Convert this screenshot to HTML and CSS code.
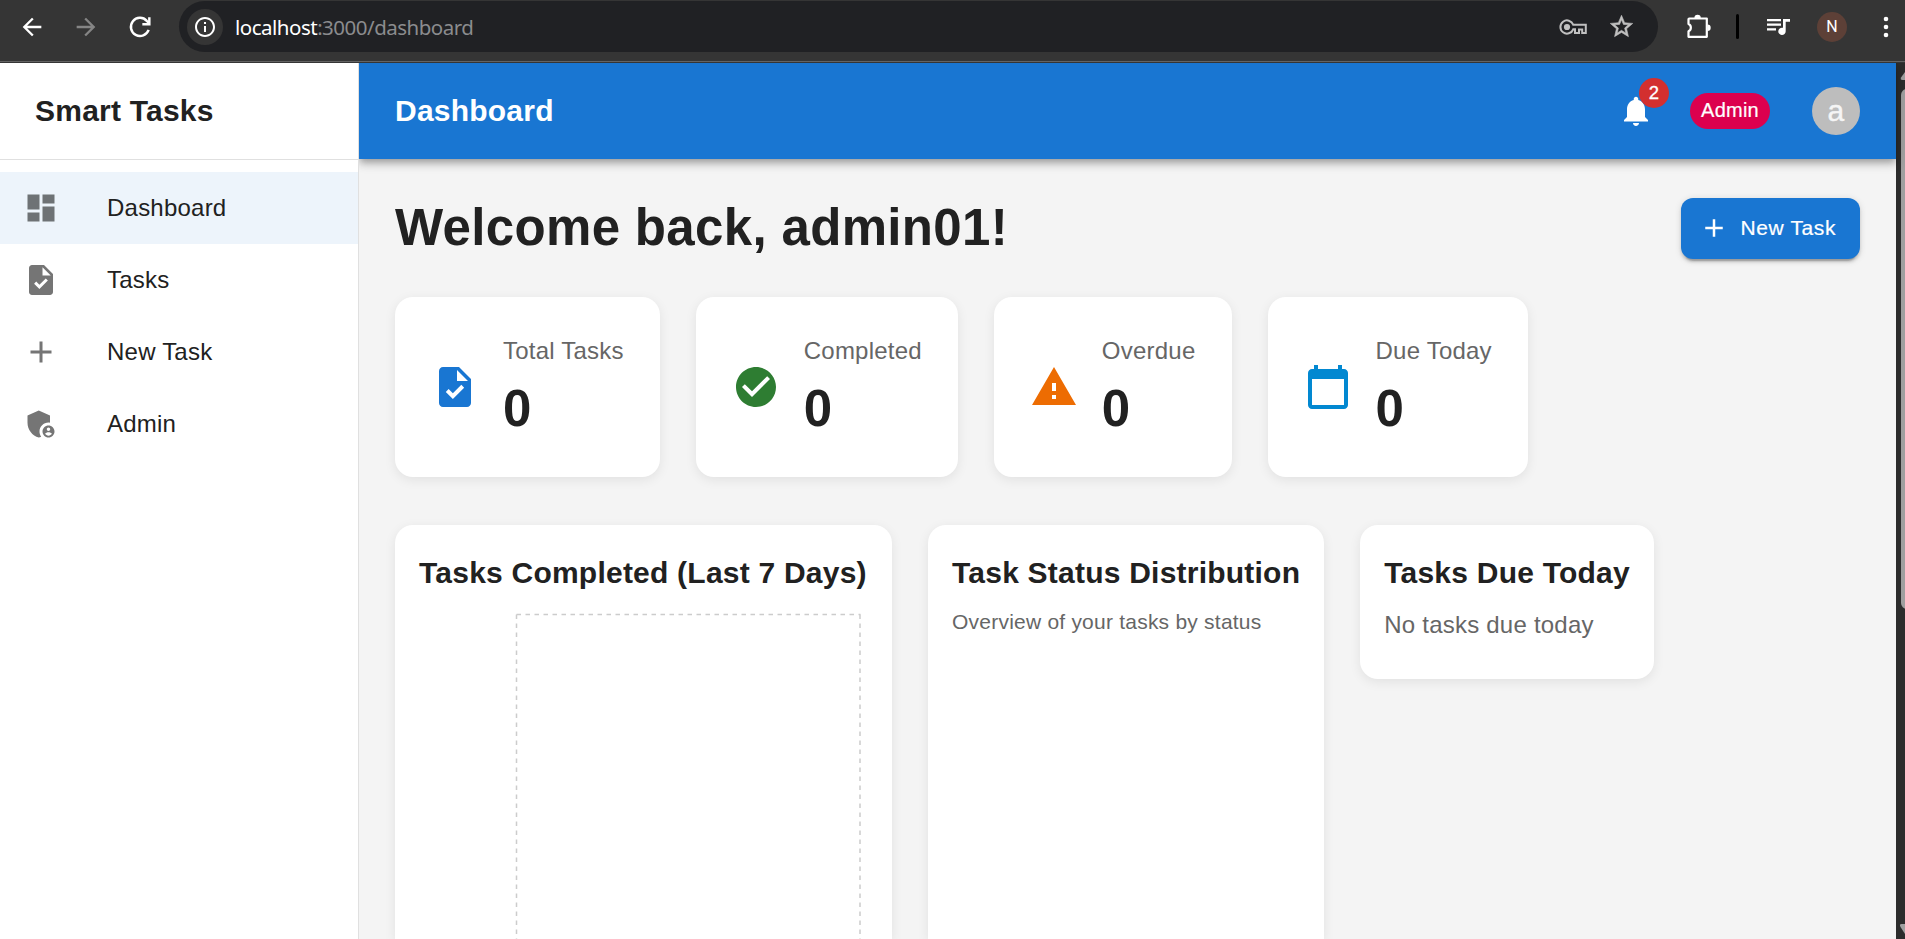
FILE: index.html
```html
<!DOCTYPE html>
<html lang="en">
<head>
<meta charset="utf-8">
<title>Smart Tasks</title>
<link rel="stylesheet" href="styles.css">
</head>
<body>
<div class="browser">
  <svg class="nav-back" viewBox="0 0 24 24"><path d="M20 11H7.83l5.59-5.59L12 4l-8 8 8 8 1.41-1.41L7.83 13H20z"/></svg>
  <svg class="nav-forward" viewBox="0 0 24 24"><path d="M12 4l-1.41 1.41L16.17 11H4v2h12.17l-5.58 5.59L12 20l8-8z"/></svg>
  <svg class="nav-reload" viewBox="0 0 24 24"><path d="M19.4 14.5A7.8 7.8 0 1 1 17.8 6.7L20 8.8M20 3.6V9.6H14" fill="none" stroke="currentColor" stroke-width="2.1"/></svg>
  <div class="omnibox">
    <span class="site-info"><svg viewBox="0 0 24 24"><path d="M11 7h2v2h-2zm0 4h2v6h-2zm1-9C6.48 2 2 6.48 2 12s4.48 10 10 10 10-4.48 10-10S17.52 2 12 2m0 18c-4.41 0-8-3.59-8-8s3.59-8 8-8 8 3.59 8 8-3.59 8-8 8"/></svg></span>
    <span class="url"><b>localhost</b>:3000/dashboard</span>
    <svg class="key" viewBox="0 0 28 16"><path d="M14.2 5.7H26.8V14H23.2V10.5H20V14H16V10.3H14.2A6.6 6.6 0 1 1 14.2 5.7Z" fill="none" stroke="currentColor" stroke-width="2"/><circle cx="8" cy="8" r="3.1"/></svg>
    <svg class="star" viewBox="0 0 24 24"><path d="m22 9.24-7.19-.62L12 2 9.19 8.63 2 9.24l5.46 4.73L5.82 21 12 17.27 18.18 21l-1.63-7.03zM12 15.4l-3.76 2.27 1-4.28-3.32-2.88 4.38-.38L12 6.1l1.71 4.04 4.38.38-3.32 2.88 1 4.28z" stroke="currentColor" stroke-width=".5"/></svg>
  </div>
  <svg class="puzzle" viewBox="0 0 26 26"><path d="M3.2 4.5H20.8V22.8H2.5V17.3A4 4 0 0 0 2.5 10V5.2Q2.5 4.5 3.2 4.5Z" fill="none" stroke="currentColor" stroke-width="2.2" stroke-linejoin="round"/><path d="M8.4 4a3.2 3.2 0 0 1 6.4 0zM21.5 10.6a3.2 3.2 0 0 1 0 6.4z"/></svg>
  <span class="separator"></span>
  <svg class="queue" viewBox="0 0 24 18"><path d="M0 1h14v2.2H0zM0 5.6h14v2.2H0zM0 10.2h9v2.2H0z"/><path d="M16 1h7v2.8h-4.3v9.5a3.7 3.7 0 1 1-2.7-3.5z"/></svg>
  <span class="profile">N</span>
  <svg class="more" viewBox="0 0 6 22"><circle cx="3" cy="3" r="2.3"/><circle cx="3" cy="11" r="2.3"/><circle cx="3" cy="19" r="2.3"/></svg>
</div>
<div class="app">
  <aside class="sidebar">
    <div class="brand">Smart Tasks</div>
    <nav class="menu">
      <a class="item selected"><svg viewBox="0 0 24 24"><path d="M3 13h8V3H3zm0 8h8v-6H3zm10 0h8V11h-8zm0-18v6h8V3z"/></svg>Dashboard</a>
      <a class="item"><svg viewBox="0 0 24 24"><path d="M14 2H6c-1.1 0-1.99.9-1.99 2L4 20c0 1.1.89 2 1.99 2H18c1.1 0 2-.9 2-2V8zm-3.06 16L7.4 14.46l1.41-1.41 2.12 2.12 4.24-4.24 1.41 1.41zM13 9V3.5L18.5 9z"/></svg>Tasks</a>
      <a class="item"><svg viewBox="0 0 24 24"><path d="M19 13h-6v6h-2v-6H5v-2h6V5h2v6h6z"/></svg>New Task</a>
      <a class="item"><svg viewBox="0 0 24 24"><path d="M17 11c.34 0 .67.04 1 .09V6.27L10.5 3 3 6.27v4.91c0 4.54 3.2 8.79 7.5 9.82.55-.13 1.08-.32 1.6-.55-.69-.98-1.1-2.17-1.1-3.45 0-3.31 2.69-6 6-6"/><path d="M17 13c-2.21 0-4 1.79-4 4s1.79 4 4 4 4-1.79 4-4-1.79-4-4-4m0 1.38c.62 0 1.12.51 1.12 1.12s-.51 1.12-1.12 1.12-1.12-.51-1.12-1.12.5-1.12 1.12-1.12m0 5.37c-.93 0-1.74-.46-2.24-1.17.05-.72 1.51-1.08 2.24-1.08s2.19.36 2.24 1.08c-.5.71-1.31 1.17-2.24 1.17"/></svg>Admin</a>
    </nav>
  </aside>
  <div class="main">
    <header class="appbar">
      <div class="appbar-title">Dashboard</div>
      <div class="bell"><svg viewBox="0 0 24 24"><path d="M12 22c1.1 0 2-.9 2-2h-4c0 1.1.89 2 2 2m6-6v-5c0-3.07-1.64-5.64-4.5-6.32V4c0-.83-.67-1.5-1.5-1.5s-1.5.67-1.5 1.5v.68C7.63 5.36 6 7.92 6 11v5l-2 2v1h16v-1z"/></svg><span class="badge">2</span></div>
      <span class="chip">Admin</span>
      <span class="avatar">a</span>
    </header>
    <main class="content">
      <div class="heading">
        <h1>Welcome back, admin01!</h1>
        <button class="new-task"><svg viewBox="0 0 24 24"><path d="M19 13h-6v6h-2v-6H5v-2h6V5h2v6h6z"/></svg>New Task</button>
      </div>
      <section class="stats">
        <div class="card stat"><svg class="blue" viewBox="0 0 24 24"><path d="M14 2H6c-1.1 0-1.99.9-1.99 2L4 20c0 1.1.89 2 1.99 2H18c1.1 0 2-.9 2-2V8zm-3.06 16L7.4 14.46l1.41-1.41 2.12 2.12 4.24-4.24 1.41 1.41zM13 9V3.5L18.5 9z"/></svg><div class="figures"><div class="label">Total Tasks</div><div class="value">0</div></div></div>
        <div class="card stat"><svg class="green" viewBox="0 0 24 24"><path d="M12 2C6.48 2 2 6.48 2 12s4.48 10 10 10 10-4.48 10-10S17.52 2 12 2m-2 15-5-5 1.41-1.41L10 14.17l7.59-7.59L19 8z"/></svg><div class="figures"><div class="label">Completed</div><div class="value">0</div></div></div>
        <div class="card stat"><svg class="orange" viewBox="0 0 24 24"><path d="M1 21h22L12 2zm12-3h-2v-2h2zm0-4h-2v-4h2z"/></svg><div class="figures"><div class="label">Overdue</div><div class="value">0</div></div></div>
        <div class="card stat"><svg class="sky" viewBox="0 0 24 24"><path d="M20 3h-1V1h-2v2H7V1H5v2H4c-1.1 0-2 .9-2 2v16c0 1.1.9 2 2 2h16c1.1 0 2-.9 2-2V5c0-1.1-.9-2-2-2m0 18H4V8h16z"/></svg><div class="figures"><div class="label">Due Today</div><div class="value">0</div></div></div>
      </section>
      <section class="panels">
        <div class="card panel tall">
          <h2>Tasks Completed (Last 7 Days)</h2>
          <svg class="chart" width="449" height="332"><g fill="none" stroke="#ccc" stroke-width="1.5" stroke-dasharray="4.5 4.5"><path d="M97.5 7.5H441.5"/><path d="M97.5 7.5V390"/><path d="M441 7.5V390"/></g></svg>
        </div>
        <div class="card panel tall">
          <h2>Task Status Distribution</h2>
          <p class="small">Overview of your tasks by status</p>
        </div>
        <div class="card panel">
          <h2>Tasks Due Today</h2>
          <p>No tasks due today</p>
        </div>
      </section>
    </main>
  </div>
  <div class="scrollbar"><svg viewBox="0 0 9 876"><path d="M6.5 17Q4 17 5 14.5L9 9V17Z"/><path d="M5.5 861Q3 861 4.500 864L9 871V861Z"/><rect x="5" y="26" width="14" height="520" rx="6"/></svg></div>
</div>
</body>
</html>
```
FILE: styles.css
```css
* { box-sizing: border-box; }
body {
  margin: 0;
  height: 939px;
  overflow: hidden;
  display: flex;
  flex-direction: column;
  font-family: "Liberation Sans", Arial, sans-serif;
  font-size: 24px;
  line-height: 1.5;
  letter-spacing: 0.00938em;
  color: #212121;
  background: #f4f4f4;
}
svg { display: block; flex: none; fill: currentColor; }
h1, h2, p { margin: 0; }

.browser {
  flex: none;
  height: 63px;
  padding: 1px 0 11px 18px;
  display: flex;
  align-items: center;
  color: #fff;
  background: linear-gradient(#353535 61px, #636363 61px, #636363 62px, #353535 62px);
}
.nav-back, .nav-forward, .nav-reload { width: 28px; height: 28px; }
.nav-forward { margin-left: 26px; color: #858585; }
.nav-reload { margin-left: 26px; }
.omnibox {
  width: 1479px;
  height: 51px;
  margin-left: 25px;
  padding: 0 23px 0 8px;
  border-radius: 26px;
  display: flex;
  align-items: center;
  background: #202124;
}
.site-info {
  width: 36px;
  height: 36px;
  border-radius: 50%;
  display: grid;
  place-items: center;
  background: #353535;
}
.site-info svg { width: 24px; height: 24px; }
.url {
  flex: 1;
  margin-left: 12px;
  font-family: "Noto Sans", "Open Sans", sans-serif;
  font-size: 20.5px;
  line-height: 28px;
  letter-spacing: -0.5px;
  color: #8b8c8e;
}
.url b { font-weight: 400; color: #fff; }
.key { width: 28px; height: 16px; color: #c0c0c0; }
.star { width: 27px; height: 27px; margin-left: 21px; color: #c0c0c0; }
.puzzle { width: 26px; height: 26px; margin-left: 28px; }
.separator { width: 3px; height: 25px; margin-left: 24px; border-radius: 2px; background: #000; }
.queue { width: 24px; height: 18px; margin-left: 28px; }
.profile {
  width: 30px;
  height: 30px;
  margin-left: 26px;
  border-radius: 50%;
  display: grid;
  place-items: center;
  font-family: Roboto, sans-serif;
  font-size: 16px;
  line-height: 1;
  background: #5d4037;
}
.more { width: 6px; height: 22px; margin-left: 36px; }

.app { flex: 1; min-height: 0; display: flex; overflow: hidden; }
.sidebar {
  flex: none;
  position: relative;
  z-index: 1;
  width: 359px;
  border-right: 1px solid #e0e0e0;
  background: #fff;
}
.brand {
  height: 97px;
  padding: 0 35px;
  border-bottom: 1px solid #e0e0e0;
  font-size: 30px;
  font-weight: 700;
  line-height: 96px;
  letter-spacing: 0.0075em;
}
.menu { padding-top: 12px; }
.item {
  height: 72px;
  padding-left: 23px;
  display: flex;
  align-items: center;
  gap: 48px;
}
.item svg { width: 36px; height: 36px; color: #757575; }
.selected { background: #edf4fb; }
.selected svg { color: #6e7275; }

.main { flex: 1; min-width: 0; display: flex; flex-direction: column; }
.appbar {
  flex: none;
  height: 96px;
  padding: 0 36px;
  display: flex;
  align-items: center;
  color: #fff;
  background: #1976d2;
  box-shadow: 0 3px 6px -1.5px rgba(0,0,0,.2), 0 6px 7.5px rgba(0,0,0,.14), 0 1.5px 15px rgba(0,0,0,.12);
}
.appbar-title { flex: 1; padding-bottom: 2px; font-size: 30px; font-weight: 700; letter-spacing: 0.0075em; }
.bell { position: relative; }
.bell svg { width: 36px; height: 36px; }
.badge {
  position: absolute;
  top: -15px;
  right: -15px;
  width: 30px;
  height: 30px;
  border-radius: 50%;
  text-align: center;
  font-size: 18.5px;
  line-height: 30px;
  -webkit-text-stroke: 0.3px currentColor;
  background: #d32f2f;
}
.chip {
  width: 80px;
  height: 36px;
  margin: 0 42px 0 36px;
  border-radius: 18px;
  text-align: center;
  font-size: 20px;
  line-height: 34px;
  -webkit-text-stroke: 0.2px currentColor;
  background: #dc004e;
}
.avatar {
  width: 48px;
  height: 48px;
  border-radius: 50%;
  text-align: center;
  font-size: 30px;
  line-height: 48px;
  color: #f5f5f5;
  -webkit-text-stroke: 0.4px currentColor;
  background: #bdbdbd;
}

.content { flex: 1; min-height: 0; padding: 36px 36px 0; overflow: hidden; display: flex; flex-direction: column; }
.appbar { position: relative; }
.heading { flex: none; display: flex; justify-content: space-between; align-items: center; height: 66px; }
h1 { padding-bottom: 2px; font-size: 51px; line-height: 63px; letter-spacing: 0.0066em; }
.new-task {
  height: 61px;
  padding: 0 24px 0 18px;
  border: 0;
  border-radius: 12px;
  display: flex;
  align-items: center;
  gap: 12px;
  font: 21px/1.75 "Liberation Sans", Arial, sans-serif;
  letter-spacing: 0.02857em;
  -webkit-text-stroke: 0.2px currentColor;
  color: #fff;
  background: #1976d2;
  box-shadow: 0 4.5px 1.5px -3px rgba(0,0,0,.2), 0 3px 3px rgba(0,0,0,.14), 0 1.5px 7.5px rgba(0,0,0,.12);
}
.new-task svg { width: 30px; height: 30px; }
.stats { flex: none; margin-top: 36px; display: flex; gap: 36px; }
.card {
  border-radius: 18px;
  background: #fff;
  box-shadow: 0 3px 12px rgba(0,0,0,.08);
}
.stat { height: 180px; padding: 0 36px; display: flex; align-items: center; gap: 24px; }
.stat svg { width: 48px; height: 48px; }
.blue { color: #1976d2; }
.green { color: #2e7d32; }
.orange { color: #ed6c02; }
.sky { color: #0288d1; }
.figures { padding-bottom: 2px; }
.label { margin-bottom: 8px; color: #666; }
.value { font-size: 51px; font-weight: 700; line-height: 63px; letter-spacing: 0.00735em; }
.panels { flex: 1; min-height: 0; margin-top: 48px; display: flex; align-items: flex-start; gap: 36px; }
.panel { padding: 24px 24px 36px; }
.tall { align-self: stretch; padding-bottom: 0; border-radius: 18px 18px 0 0; }
h2 { margin-bottom: 10px; font-size: 30px; line-height: 48px; letter-spacing: 0.0075em; }
.panel p { color: #666; }
.panel .small { font-size: 21px; line-height: 30px; letter-spacing: 0.01071em; }

.scrollbar { flex: none; width: 9px; background: #2c2c2c; color: #9f9f9f; overflow: hidden; }
.scrollbar svg { width: 9px; height: 876px; }
```
